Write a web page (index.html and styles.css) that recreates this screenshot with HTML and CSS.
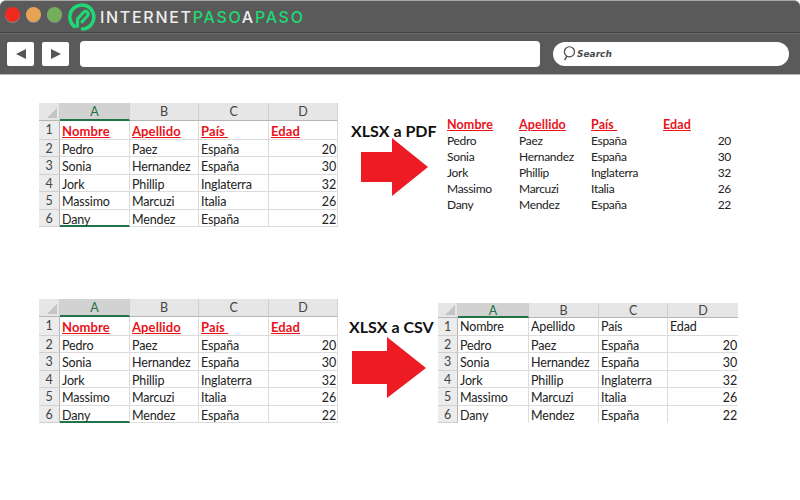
FILE: index.html
```html
<!DOCTYPE html>
<html lang="es">
<head>
<meta charset="utf-8">
<title>XLSX a PDF y CSV</title>
<link rel="stylesheet" href="styles.css">
</head>
<body>
<header class="chrome">
  <div class="titlebar">
    <span class="dot dot-red"></span>
    <span class="dot dot-orange"></span>
    <span class="dot dot-green"></span>
    <svg class="logo-icon" viewBox="0 0 28 28" width="28" height="28" aria-hidden="true">
      <path d="M6.5 23.5A12 12 0 1 1 14.5 26" fill="none" stroke="#1fd873" stroke-width="3.6" stroke-linecap="round"/>
      <path d="M9.5 23.5V16L15.5 9.2Q17.6 7.6 19.3 9.2Q21 11 19.3 13L14 18.8" fill="none" stroke="#1fd873" stroke-width="3.2" stroke-linecap="round" stroke-linejoin="round"/>
    </svg>
    <div class="logo-text">INTERNET<span class="green">PASO</span>A<span class="green">PASO</span></div>
  </div>
  <div class="toolbar">
    <button class="nav-btn" aria-label="Atrás"><svg viewBox="0 0 12 12" width="12" height="12"><path d="M11 1V11L1 6Z" fill="#555"/></svg></button>
    <button class="nav-btn" aria-label="Adelante"><svg viewBox="0 0 12 12" width="12" height="12"><path d="M1 1V11L11 6Z" fill="#555"/></svg></button>
    <div class="address"></div>
    <div class="search">
      <svg viewBox="0 0 16 20" width="14" height="18" aria-hidden="true"><circle cx="8.5" cy="7.5" r="5.8" fill="none" stroke="#4a4a4a" stroke-width="1.4"/><path d="M5.5 12.5L3 17" stroke="#4a4a4a" stroke-width="1.6"/></svg>
      <span>Search</span>
    </div>
  </div>
</header>
<main class="page">
  <section class="row row-pdf">
    <div class="sheet">
      <div class="corner"></div><div class="ch ch-on">A</div><div class="ch">B</div><div class="ch">C</div><div class="ch">D</div>
      <div class="rh rh-tall">1</div><div class="c c-tall h">Nombre</div><div class="c c-tall h">Apellido</div><div class="c c-tall h">País&nbsp;</div><div class="c c-tall h">Edad</div>
      <div class="rh">2</div><div class="c">Pedro</div><div class="c">Paez</div><div class="c">España</div><div class="c n">20</div>
      <div class="rh">3</div><div class="c">Sonia</div><div class="c">Hernandez</div><div class="c">España</div><div class="c n">30</div>
      <div class="rh">4</div><div class="c">Jork</div><div class="c">Phillip</div><div class="c">Inglaterra</div><div class="c n">32</div>
      <div class="rh">5</div><div class="c">Massimo</div><div class="c">Marcuzi</div><div class="c">Italia</div><div class="c n">26</div>
      <div class="rh">6</div><div class="c c-sel">Dany</div><div class="c">Mendez</div><div class="c">España</div><div class="c n">22</div>
    </div>
    <div class="mid mid-pdf">
      <h2 class="label">XLSX a PDF</h2>
      <svg class="arrow" viewBox="0 0 67 58" width="67" height="58" aria-hidden="true"><path d="M0 14H31V0L67 29L31 58V44H0Z" fill="#ed1c24"/></svg>
    </div>
    <div class="pdf">
      <div class="p h">Nombre</div><div class="p h">Apellido</div><div class="p h">País&nbsp;</div><div class="p h">Edad</div>
      <div class="p">Pedro</div><div class="p">Paez</div><div class="p">España</div><div class="p n">20</div>
      <div class="p">Sonia</div><div class="p">Hernandez</div><div class="p">España</div><div class="p n">30</div>
      <div class="p">Jork</div><div class="p">Phillip</div><div class="p">Inglaterra</div><div class="p n">32</div>
      <div class="p">Massimo</div><div class="p">Marcuzi</div><div class="p">Italia</div><div class="p n">26</div>
      <div class="p">Dany</div><div class="p">Mendez</div><div class="p">España</div><div class="p n">22</div>
    </div>
  </section>
  <section class="row row-csv">
    <div class="sheet">
      <div class="corner"></div><div class="ch ch-on">A</div><div class="ch">B</div><div class="ch">C</div><div class="ch">D</div>
      <div class="rh rh-tall">1</div><div class="c c-tall h">Nombre</div><div class="c c-tall h">Apellido</div><div class="c c-tall h">País&nbsp;</div><div class="c c-tall h">Edad</div>
      <div class="rh">2</div><div class="c">Pedro</div><div class="c">Paez</div><div class="c">España</div><div class="c n">20</div>
      <div class="rh">3</div><div class="c">Sonia</div><div class="c">Hernandez</div><div class="c">España</div><div class="c n">30</div>
      <div class="rh">4</div><div class="c">Jork</div><div class="c">Phillip</div><div class="c">Inglaterra</div><div class="c n">32</div>
      <div class="rh">5</div><div class="c">Massimo</div><div class="c">Marcuzi</div><div class="c">Italia</div><div class="c n">26</div>
      <div class="rh">6</div><div class="c c-sel">Dany</div><div class="c">Mendez</div><div class="c">España</div><div class="c n">22</div>
    </div>
    <div class="mid mid-csv">
      <h2 class="label">XLSX a CSV</h2>
      <svg class="arrow" viewBox="0 0 74 61" width="74" height="61" aria-hidden="true"><path d="M0 14H35V0L74 31L35 61V47H0Z" fill="#ed1c24"/></svg>
    </div>
    <div class="sheet sheet-csv">
      <div class="corner"></div><div class="ch ch-on">A</div><div class="ch">B</div><div class="ch">C</div><div class="ch">D</div>
      <div class="rh rh-tall">1</div><div class="c c-tall">Nombre</div><div class="c c-tall">Apellido</div><div class="c c-tall">País</div><div class="c c-tall">Edad</div>
      <div class="rh">2</div><div class="c">Pedro</div><div class="c">Paez</div><div class="c">España</div><div class="c n">20</div>
      <div class="rh">3</div><div class="c">Sonia</div><div class="c">Hernandez</div><div class="c">España</div><div class="c n">30</div>
      <div class="rh">4</div><div class="c">Jork</div><div class="c">Phillip</div><div class="c">Inglaterra</div><div class="c n">32</div>
      <div class="rh">5</div><div class="c">Massimo</div><div class="c">Marcuzi</div><div class="c">Italia</div><div class="c n">26</div>
      <div class="rh">6</div><div class="c c-sel">Dany</div><div class="c">Mendez</div><div class="c">España</div><div class="c n">22</div>
    </div>
  </section>
</main>
</body>
</html>
```
FILE: styles.css
```css
* { box-sizing: border-box; }
html, body { margin: 0; padding: 0; }
body { width: 800px; height: 500px; overflow: hidden; background: #fff; font-family: Lato, "Liberation Sans", sans-serif; color: #222; }

.chrome { height: 75px; background: #5a5a5a; border-top: 1px solid #a8a8a8; border-bottom: 1px solid #b5b5b5; border-radius: 6px 6px 0 0; }
.titlebar { height: 32px; display: flex; align-items: center; padding-left: 5px; border-bottom: 1px solid #444; }
.dot { width: 15px; height: 15px; border-radius: 50%; margin: 0 6px 4px 0; flex: none; box-shadow: 0 1px 0 #8a8a8a; }
.dot-red { background: #f1291f; }
.dot-orange { background: #e8a254; }
.dot-green { background: #72ae5c; }
.logo-icon { flex: none; }
.logo-text { margin-left: 4px; font-family: Inter, "Liberation Sans", sans-serif; font-size: 16px; font-weight: 500; letter-spacing: 1.7px; color: #eee; white-space: nowrap; }
.green { color: #1fd873; }

.toolbar { height: 41px; display: flex; align-items: center; padding: 0 11px 0 7px; border-top: 1px solid #6e6e6e; }
.nav-btn { width: 27px; height: 24px; padding: 0; margin-right: 8px; border: none; border-radius: 2px; background: #fff; display: flex; align-items: center; justify-content: center; }
.nav-btn + .nav-btn { margin-right: 11px; }
.address { width: 58px; flex: 1 1 auto; height: 26px; background: #fff; border-radius: 4px; margin-right: 13px; }
.search { width: 236px; height: 24px; background: #fff; border-radius: 12px; display: flex; align-items: center; padding-left: 9px; font-family: "DejaVu Sans", sans-serif; font-size: 9px; font-weight: 700; font-style: oblique; color: #4a4a4a; flex: none; }
.search span { margin-left: 1px; }

.page { padding: 28px 0 0 39px; }
.row { display: flex; }
.row-pdf { height: 196px; }

.sheet { display: grid; width: 299px; grid-template-columns: 21px 70px 69px 70px 69px; grid-template-rows: 18px 19px repeat(5, 17.4px); align-self: flex-start; font-size: 12.5px; line-height: 16px; letter-spacing: -0.15px; }
.sheet-csv { grid-template-rows: 15px 18px repeat(5, 17.4px); margin-top: 4px; width: 300px; grid-template-columns: 20px 71px 70px 69px 70px; }
.corner { background: #e6e6e6; border-right: 1px solid #cfcfcf; border-bottom: 1px solid #b5b5b5; position: relative; }
.corner::after { content: ""; position: absolute; right: 2px; bottom: 2px; border-style: solid; border-width: 0 0 10px 10px; border-color: transparent transparent #c4c4c4 transparent; }
.ch { background: #e6e6e6; border-right: 1px solid #cfcfcf; border-bottom: 1px solid #b5b5b5; text-align: center; color: #444; line-height: 18px; }
.ch-on { background: #d2d2d2; color: #217346; border-bottom: 2px solid #217346; }
.sheet-csv .ch { line-height: 15px; }
.rh { background: #ececec; border-right: 1px solid #b5b5b5; border-bottom: 1px solid #d0d0d0; text-align: center; color: #444; padding-top: 1px; }
.c { border-right: 1px solid #dcdcdc; border-bottom: 1px solid #dcdcdc; padding: 2px 0 0 2px; white-space: nowrap; }
.c-sel { border-bottom: 2px solid #217346; }
.n { text-align: right; padding: 2px 1px 0 0; }
.sheet-csv .ch:nth-child(5), .sheet-csv .n, .sheet-csv .c:nth-child(5n) { border-right: none; }
.sheet-csv .c:nth-last-child(-n+4) { border-bottom: none; }
.sheet-csv .c-sel { border-bottom: 2px solid #217346; }
.c-tall { line-height: 19px; padding-top: 1px; }
.sheet-csv .c-tall { padding-top: 0; line-height: 18px; }
.h { color: #e8131b; font-size: 13px; font-weight: 700; letter-spacing: 0.1px; text-decoration: underline; }

.mid { display: flex; flex-direction: column; align-items: flex-start; flex: none; }
.mid-pdf { width: 109px; padding: 18px 0 0 13px; }
.mid-csv { width: 100px; padding: 18px 0 0 11px; }
.label { margin: 0; font-family: Lato, "Liberation Sans", sans-serif; font-size: 16px; line-height: 20px; font-weight: 700; color: #111; white-space: nowrap; }
.arrow { display: block; }
.mid-pdf .arrow { margin: -3px 0 0 10px; }
.mid-csv .arrow { margin: 0 0 0 3px; }

.pdf { display: grid; grid-template-columns: 72px 72px 72px 68px; grid-auto-rows: 16px; margin-top: 14px; align-self: flex-start; font-size: 12px; line-height: 16px; letter-spacing: -0.3px; }
.p { white-space: nowrap; }
.p.n { padding: 0; }
.p.h { font-size: 12.5px; padding: 0; }
```
